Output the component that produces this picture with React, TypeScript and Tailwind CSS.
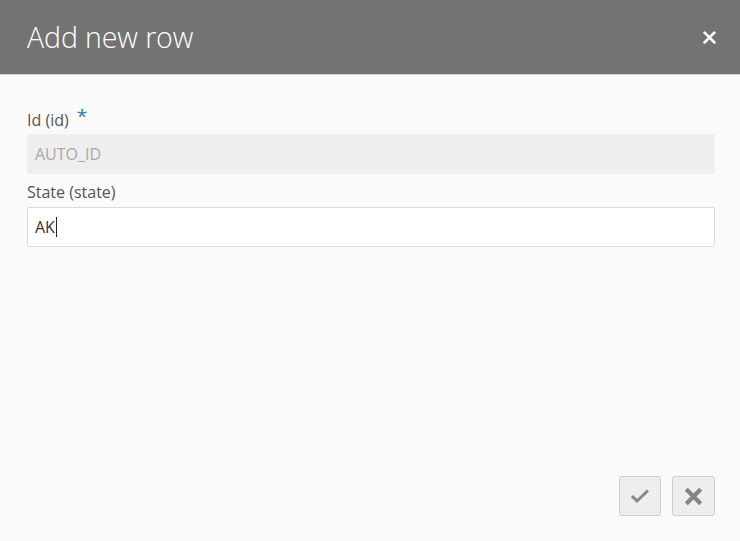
export default function App() {
  return (
    <div
      className="flex h-[541px] w-[740px] flex-col bg-[#fafafa]"
      style={{ fontFamily: '"Open Sans", "Noto Sans", sans-serif' }}
    >
      <header className="flex h-[75px] shrink-0 items-center justify-between border-b border-[#d0d0d0] bg-[#737373] pl-[27px] pr-[19px]">
        <h1 className="text-[28.5px] font-light tracking-[-0.1px] text-white">Add new row</h1>
        <button className="flex h-6 w-6 items-center justify-center text-white">
          <svg viewBox="0 0 12 12" className="h-[13px] w-[13px]">
            <path d="M1.5 1.5 L10.5 10.5 M10.5 1.5 L1.5 10.5" stroke="currentColor" strokeWidth="2.6" strokeLinecap="round" />
          </svg>
        </button>
      </header>

      <div className="flex flex-1 flex-col pl-[27px] pr-[25px] pt-[33px]">
        <label className="flex items-start text-[16px] leading-[24px] text-[#555]">
          Id (id)
          <span className="ml-[8px] -mt-[4px] text-[19px] text-[#2b7bb9]">*</span>
        </label>
        <div className="mt-[2px] flex h-[40px] items-center rounded-[3px] bg-[#eeeeee] px-[8px] text-[16px] text-[#a8a8a8]">
          AUTO_ID
        </div>
        <label className="mt-[6px] text-[16px] leading-[24px] text-[#555]">State (state)</label>
        <div className="mt-[3px] flex h-[40px] items-center rounded-[2px] border border-[#dcdcdc] bg-white px-[7px] text-[16px] text-[#333]">
          AK
          <span className="ml-[1px] inline-block h-[20px] w-px bg-[#222]" />
        </div>

        <div className="mt-auto mb-[25px] flex justify-end gap-[11px]">
          <button className="flex h-[40px] w-[42px] items-center justify-center rounded-[3px] border border-[#cfcfcf] bg-[#eeeeee] text-[#888]">
            <svg viewBox="0 0 20 16" className="h-[16px] w-[20px]">
              <path d="M2 8 L7 13 L18 2.5" fill="none" stroke="currentColor" strokeWidth="3" />
            </svg>
          </button>
          <button className="flex h-[40px] w-[43px] items-center justify-center rounded-[3px] border border-[#cfcfcf] bg-[#eeeeee] text-[#858585]">
            <svg viewBox="0 0 16 16" className="h-[21px] w-[21px]">
              <path d="M2.5 2.5 L13.5 13.5 M13.5 2.5 L2.5 13.5" stroke="currentColor" strokeWidth="3.2" />
            </svg>
          </button>
        </div>
      </div>
    </div>
  );
}
